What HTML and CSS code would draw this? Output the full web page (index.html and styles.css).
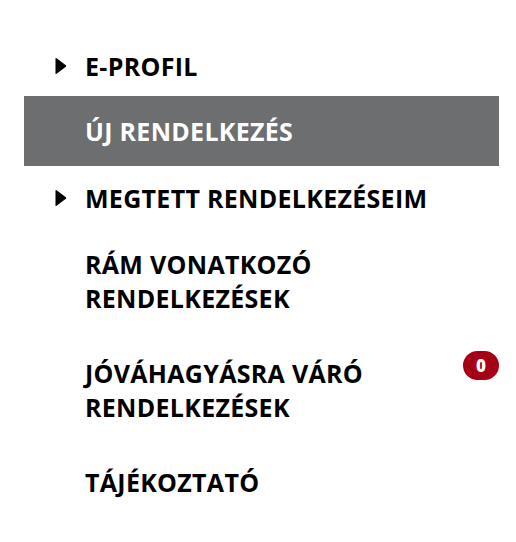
FILE: index.html
```html
<!DOCTYPE html>
<html lang="hu">
<head>
    <meta charset="UTF-8">
    <meta name="viewport" content="width=device-width, initial-scale=1.0">
    <title>Rendelkezések</title>
    <link rel="stylesheet" href="styles.css">
</head>
<body>
    <nav class="side-menu">
        <ul>
            <li class="menu-item has-sub">
                <span class="arrow"><svg width="12" height="18" viewBox="0 0 12 18"><path d="M1.6 1.2 Q0.5 0.5 0.5 1.8 L0.5 16.2 Q0.5 17.5 1.6 16.8 L10.9 9.8 Q11.8 9 10.9 8.2 Z" fill="#000"/></svg></span>
                <a href="#">E-PROFIL</a>
            </li>
            <li class="menu-item active">
                <span class="arrow"></span>
                <a href="#">ÚJ RENDELKEZÉS</a>
            </li>
            <li class="menu-item has-sub">
                <span class="arrow"><svg width="12" height="18" viewBox="0 0 12 18"><path d="M1.6 1.2 Q0.5 0.5 0.5 1.8 L0.5 16.2 Q0.5 17.5 1.6 16.8 L10.9 9.8 Q11.8 9 10.9 8.2 Z" fill="#000"/></svg></span>
                <a href="#">MEGTETT RENDELKEZÉSEIM</a>
            </li>
            <li class="menu-item">
                <span class="arrow"></span>
                <a href="#">RÁM VONATKOZÓ<br>RENDELKEZÉSEK</a>
            </li>
            <li class="menu-item with-badge">
                <span class="arrow"></span>
                <a href="#">JÓVÁHAGYÁSRA VÁRÓ<br>RENDELKEZÉSEK</a>
                <span class="badge">0</span>
            </li>
            <li class="menu-item">
                <span class="arrow"></span>
                <a href="#">TÁJÉKOZTATÓ</a>
            </li>
        </ul>
    </nav>
</body>
</html>
```

FILE: styles.css
```css
body {
    margin: 0;
    background: #fff;
    font-family: 'Open Sans', 'Noto Sans', Arial, sans-serif;
}
.side-menu {
    width: 475px;
    margin: 33px 0 0 24px;
}
.side-menu ul {
    list-style: none;
    margin: 0;
    padding: 0;
}
.menu-item {
    display: flex;
    align-items: flex-start;
    padding: 16px 0 16px 31px;
    line-height: 34px;
}
.menu-item a {
    flex: 1;
    color: #000;
    text-decoration: none;
    font-size: 25px;
    font-weight: 700;
    letter-spacing: 0.3px;
}
.arrow {
    width: 30px;
    height: 34px;
    display: flex;
    align-items: center;
}
.menu-item.active {
    background: #6d6e70;
    padding-top: 18px;
    padding-bottom: 18px;
    margin: -3px 0 -1px 0;
}
.menu-item.active a {
    color: #fff;
}
.menu-item.with-badge {
    margin-top: 9px;
    margin-bottom: 9px;
}
.badge {
    background: #a50016;
    color: #fff;
    font-size: 17px;
    font-weight: 800;
    line-height: 29px;
    min-width: 36px;
    height: 29px;
    border-radius: 15px;
    text-align: center;
    margin-top: -5px;
}
```
